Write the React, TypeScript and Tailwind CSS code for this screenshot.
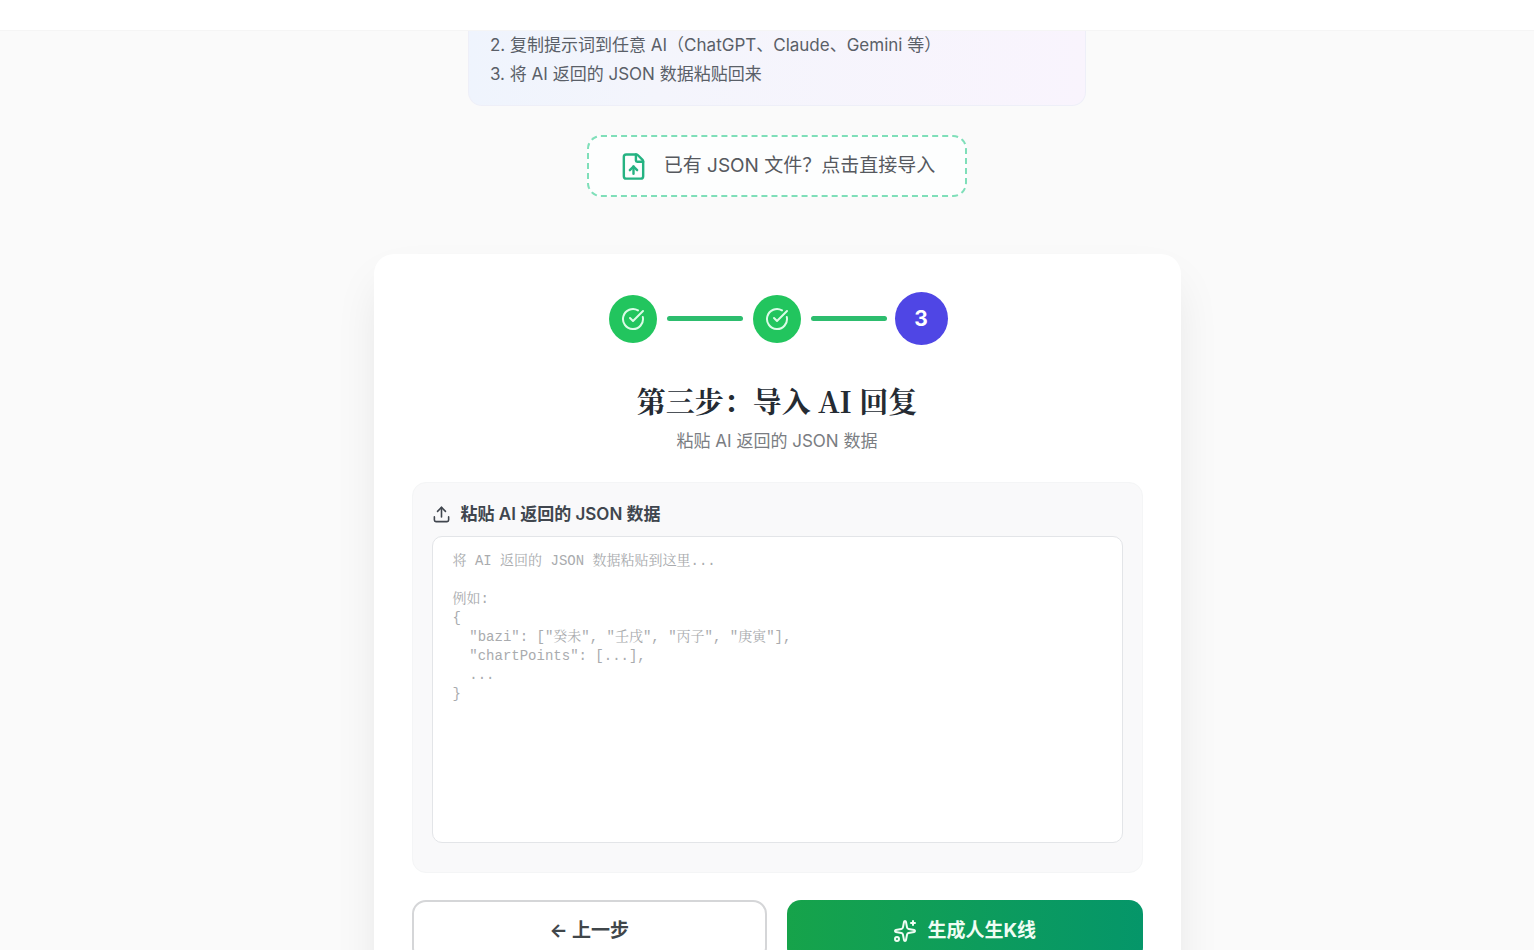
import React, { useState } from "react";
import { CircleCheckBig, FileUp, Sparkles, Upload } from "lucide-react";

const PLACEHOLDER = `将 AI 返回的 JSON 数据粘贴到这里...

例如:
{
  "bazi": ["癸未", "壬戌", "丙子", "庚寅"],
  "chartPoints": [...],
  ...
}`;

function DoneStep() {
  return (
    <li className="flex size-12 items-center justify-center rounded-full bg-[#22c55e] text-green-100">
      <CircleCheckBig size={24} strokeWidth={2} aria-label="已完成" />
    </li>
  );
}

function StepLine() {
  return <li aria-hidden="true" className="h-[5px] w-[76px] rounded-full bg-[#2dbd6e]" />;
}

function Steps() {
  return (
    <ol className="flex h-[53px] items-center justify-center gap-[10px]">
      <DoneStep />
      <StepLine />
      <DoneStep />
      <StepLine />
      <li
        aria-current="step"
        className="-mx-[2px] flex size-[53px] items-center justify-center rounded-full bg-[#4f46e5] text-[21px] font-bold text-white"
      >
        3
      </li>
    </ol>
  );
}

export default function App() {
  const [json, setJson] = useState("");

  return (
    <div className="min-h-screen bg-[#fafafa] font-['Inter','Noto_Sans_CJK_SC',sans-serif] text-neutral-800">
      <header className="h-[31px] border-b border-neutral-100 bg-white" />

      <main className="flex flex-col items-center pl-5">
        <section className="w-full max-w-[618px] rounded-b-[14px] border border-t-0 border-[#eeeff8] bg-linear-to-r from-[#eff4fd] via-[#f4f5fc] via-30% to-[#f9f4fd] px-[21px] pb-4 text-[17px] leading-[29px] text-[#5a5f68]">
          <p>2. 复制提示词到任意 AI（ChatGPT、Claude、Gemini 等）</p>
          <p>3. 将 AI 返回的 JSON 数据粘贴回来</p>
        </section>

        <button
          type="button"
          className="mt-[29px] flex h-[62px] items-center gap-4 rounded-[14px] border-2 border-dashed border-[#7fdfb9] bg-[#fdfefe] px-[30px] text-[19px] text-[#56595e]"
        >
          <FileUp size={29} className="text-[#25b382]" aria-hidden="true" />
          已有 JSON 文件？点击直接导入
        </button>

        <section className="mt-[57px] w-full max-w-[807px] rounded-[20px] bg-white px-[38px] pt-[38px] pb-10 shadow-[0_24px_48px_-8px_rgba(0,0,0,0.1)]">
          <Steps />

          <h2 className="mt-9 text-center font-['Noto_Serif_CJK_SC','Liberation_Serif',serif] text-[29px] leading-[40px] font-bold text-[#252b33]">
            第三步：导入 AI 回复
          </h2>
          <p className="mt-2 text-center text-[17px] leading-6 text-[#7a7d82]">
            粘贴 AI 返回的 JSON 数据
          </p>

          <div className="mt-[29px] rounded-[14px] border border-[#f4f5f6] bg-[#f9f9fa] px-[19px] pt-[19px] pb-[29px]">
            <label
              htmlFor="json-input"
              className="flex items-center gap-[10px] text-[17px] leading-6 font-semibold text-[#40464e]"
            >
              <Upload size={19} aria-hidden="true" />
              粘贴 AI 返回的 JSON 数据
            </label>
            <textarea
              id="json-input"
              value={json}
              onChange={(event) => setJson(event.target.value)}
              placeholder={PLACEHOLDER}
              className="mt-[10px] block h-[307px] w-full resize-none rounded-[10px] border border-[#e3e5e8] bg-white px-5 py-[15px] font-['Liberation_Mono','Noto_Serif_CJK_SC',monospace] text-[14px] leading-[19px] outline-none placeholder:text-[#a9abae]"
            />
          </div>

          <div className="mt-[27px] grid grid-cols-2 gap-5 text-[19px] font-bold">
            <button
              type="button"
              className="h-[62px] rounded-[14px] border-2 border-[#d5d6d8] bg-white text-[#40464a]"
            >
              ← 上一步
            </button>
            <button
              type="button"
              className="flex h-[62px] items-center justify-center gap-[10px] rounded-[14px] bg-linear-to-r from-[#16a34a] to-[#059669] text-green-50"
            >
              <Sparkles size={24} aria-hidden="true" />
              生成人生K线
            </button>
          </div>
        </section>
      </main>
    </div>
  );
}
